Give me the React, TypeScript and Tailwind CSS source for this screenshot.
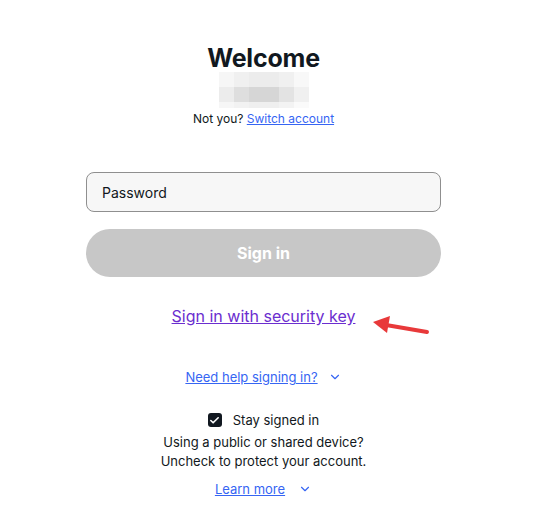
import { ChevronDown, Check } from "lucide-react";

const blur = [
  ["#f6f6f6", "#f0f0f0", "#ececec", "#ececec", "#f0f0f0", "#f8f8f8"],
  ["#ececec", "#dedede", "#d6d6d6", "#d6d6d6", "#e3e3e3", "#f0f0f0"],
  ["#f6f6f6", "#f2f2f2", "#efefef", "#efefef", "#f3f3f3", "#fafafa"],
];

const App = () => {
  return (
    <div className="relative w-[539px] h-[531px] bg-white text-[#111820] font-['Inter',sans-serif]">
      <div className="ml-[86px] w-[355px] pt-[42px] flex flex-col items-center">
        <h1 className="text-[25px] leading-[32px] font-bold tracking-[-0.2px]">Welcome</h1>
        <div className="mt-[-2px] flex flex-col">
          {blur.map((row, i) => (
            <div key={i} className="flex">
              {row.map((c, j) => (
                <div key={j} className={i === 2 ? "w-[15px] h-[6px]" : "w-[15px] h-[15px]"} style={{ background: c }} />
              ))}
            </div>
          ))}
        </div>
        <p className="mt-[3px] text-[12px] leading-[16px]">
          Not you? <a className="text-[#3665f3] underline">Switch account</a>
        </p>

        <div className="mt-[45px] w-full h-[40px] rounded-[8px] border border-[#8f8f8f] bg-[#f7f7f7] flex items-center px-[15px] text-[14px]">
          Password
        </div>
        <button className="mt-[17px] w-full h-[48px] rounded-full bg-[#c7c7c7] text-white text-[16px] font-bold">
          Sign in
        </button>

        <a className="mt-[27px] text-[16px] leading-[24px] text-[#6b2ecf] underline">Sign in with security key</a>

        <div className="mt-[40px] flex items-center gap-[10px] text-[13px] leading-[18px] text-[#3665f3]">
          <a className="underline">Need help signing in?</a>
          <ChevronDown size={14} strokeWidth={2} />
        </div>

        <div className="mt-[25px] flex items-center gap-[11px] text-[13px] leading-[18px]">
          <span className="w-[14px] h-[14px] rounded-[3px] bg-[#111820] flex items-center justify-center">
            <Check size={11} strokeWidth={3.5} className="text-white" />
          </span>
          <span>Stay signed in</span>
        </div>
        <p className="mt-[4px] text-[13px] leading-[19px] text-center">
          Using a public or shared device?
          <br />
          Uncheck to protect your account.
        </p>
        <div className="mt-[9px] flex items-center gap-[13px] text-[13px] leading-[18px] text-[#3665f3]">
          <a className="underline">Learn more</a>
          <ChevronDown size={14} strokeWidth={2} />
        </div>
      </div>

      <svg className="absolute left-[370px] top-[314px]" width="62" height="24" viewBox="0 0 62 24">
        <path d="M57 18 L16 11" stroke="#e8393a" strokeWidth="4" strokeLinecap="round" />
        <path d="M3 8 L20 2 L17 19 Z" fill="#e8393a" />
      </svg>
    </div>
  );
};

export default App;
